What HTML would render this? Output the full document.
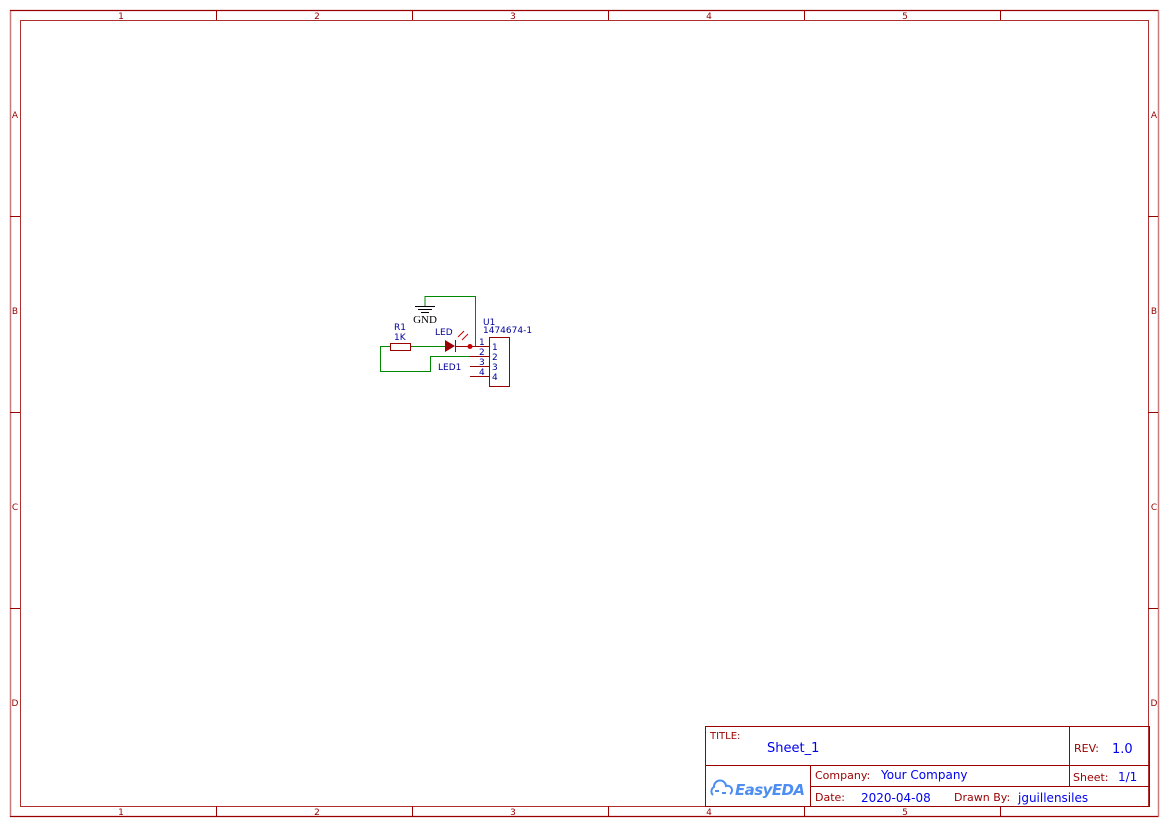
<!DOCTYPE html>
<html><head><style>body{margin:0;background:#fff}svg{display:block}</style></head><body>
<svg width="1169" height="827" xmlns="http://www.w3.org/2000/svg" font-family="'DejaVu Sans','Liberation Sans',sans-serif">
<g fill="none" stroke="#990000">
<rect x="10.5" y="10.5" width="1148" height="806" stroke="#c97a7a" stroke-width="1.5"/>
<rect x="20.5" y="20.5" width="1128" height="786" stroke="#b03030"/>
<path d="M10 10.5H1158M10 816.5H1158" stroke="#990000"/>
<path d="M216.5 10V20M412.5 10V20M608.5 10V20M804.5 10V20M1000.5 10V20M216.5 806V816M412.5 806V816M608.5 806V816M804.5 806V816M1000.5 806V816M10 216.5H20M10 412.5H20M10 608.5H20M1148 216.5H1158M1148 412.5H1158M1148 608.5H1158"/>
<rect x="705.5" y="726.5" width="444" height="80"/>
<path d="M705 765.5H1149M1069.5 726V786M810.5 765V806M810 786.5H1149"/>
</g>
<g fill="#990000" font-size="9" text-anchor="middle">
<text x="121" y="19">1</text><text x="317" y="19">2</text><text x="513" y="19">3</text><text x="709" y="19">4</text><text x="905" y="19">5</text>
<text x="121" y="815">1</text><text x="317" y="815">2</text><text x="513" y="815">3</text><text x="709" y="815">4</text><text x="905" y="815">5</text>
<text x="15" y="118">A</text><text x="15" y="314">B</text><text x="15" y="510">C</text><text x="15" y="706">D</text>
<text x="1154" y="118">A</text><text x="1154" y="314">B</text><text x="1154" y="510">C</text><text x="1154" y="706">D</text>
</g>
<g font-size="11" fill="#990000">
<text x="710" y="739" font-size="10">TITLE:</text>
<text x="1074" y="752">REV:</text>
<text x="1073" y="781">Sheet:</text>
<text x="815" y="779">Company:</text>
<text x="815" y="801">Date:</text>
<text x="954" y="801">Drawn By:</text>
</g>
<g font-size="13" fill="#0000ee">
<text x="767" y="752">Sheet_1</text>
<text x="1112" y="753">1.0</text>
<text x="1118" y="781" font-size="12">1/1</text>
<text x="881" y="779" font-size="12">Your Company</text>
<text x="861" y="802" font-size="12">2020-04-08</text>
<text x="1018" y="802" font-size="12">jguillensiles</text>
</g>
<g fill="none" stroke="#4d8ef0" stroke-width="2">
<path d="M713 795a5 5 0 0 1 1-8a6 6 0 0 1 12-1a4.5 4.5 0 0 1 4 8"/><path d="M715 791h4M722 793h4"/>
</g>
<text x="735" y="795" font-size="15" font-style="italic" font-weight="bold" fill="#4d8ef0" textLength="70">EasyEDA</text>
<g fill="none" stroke="#008800" stroke-width="1">
<path d="M425 306V296.5H475.5V346"/>
<path d="M380 346.5H390M380.5 346V371.5H430.5V356.5H470M410 346.5H445"/>
</g>
<g stroke="#000" stroke-width="1"><path d="M415 306.5H435M418 309.5H432M421 312.5H429"/></g>
<text x="425" y="323" font-family="'Liberation Serif',serif" font-size="11" text-anchor="middle">GND</text>
<g fill="none" stroke="#990000">
<rect x="390.5" y="343.5" width="20" height="7"/>
<path d="M455.5 340V352M455 346.5H470M470 346.5H490M470 356.5H490M470 366.5H490M470 376.5H490"/>
<rect x="489.5" y="337.5" width="20" height="49"/>
<path d="M458 337l6-6M462 340l6-6" stroke="#cc0000"/>
</g>
<path d="M445 340L455 346L445 352Z" fill="#990000"/>
<circle cx="470" cy="346.5" r="2.5" fill="#cc0000"/>
<g font-size="9" fill="#000099">
<text x="394" y="330">R1</text><text x="394" y="340">1K</text>
<text x="435" y="335">LED</text><text x="438" y="370">LED1</text>
<text x="483" y="325">U1</text><text x="483" y="333">1474674-1</text>
<text x="479" y="345">1</text><text x="479" y="355">2</text><text x="479" y="365">3</text><text x="479" y="375">4</text>
<text x="492" y="350">1</text><text x="492" y="360">2</text><text x="492" y="370">3</text><text x="492" y="380">4</text>
</g>
</svg>
</body></html>
